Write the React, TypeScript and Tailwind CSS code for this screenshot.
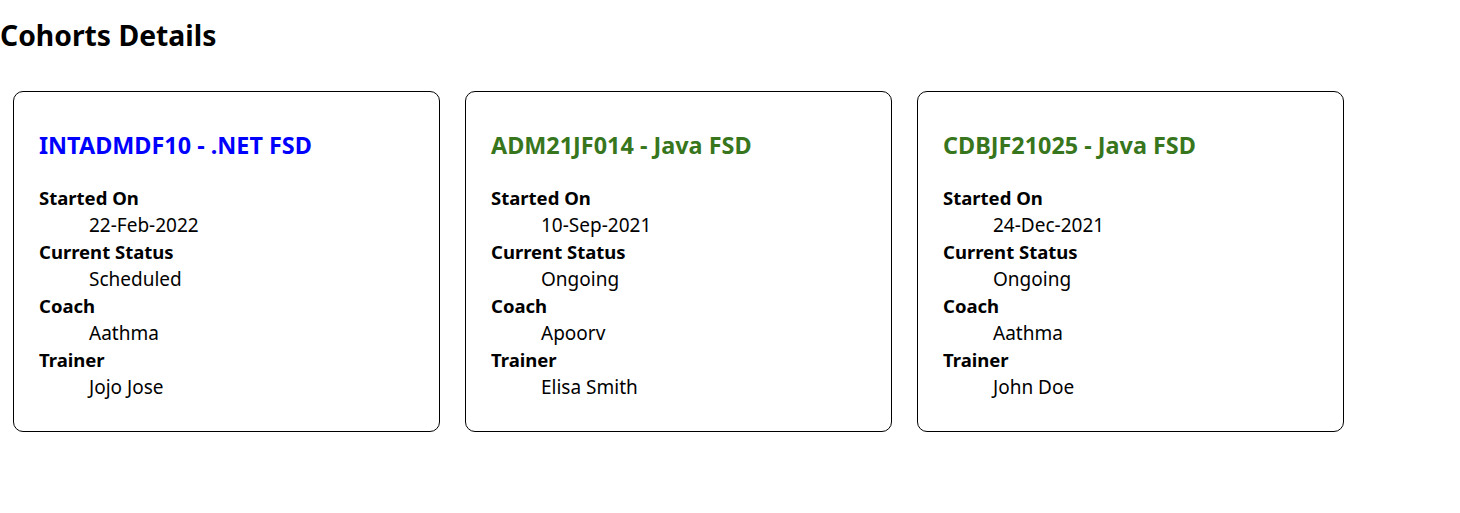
import React from "react";

type Cohort = {
  title: string;
  color: string;
  started: string;
  status: string;
  coach: string;
  trainer: string;
};

const cohorts: Cohort[] = [
  { title: "INTADMDF10 - .NET FSD", color: "blue", started: "22-Feb-2022", status: "Scheduled", coach: "Aathma", trainer: "Jojo Jose" },
  { title: "ADM21JF014 - Java FSD", color: "green", started: "10-Sep-2021", status: "Ongoing", coach: "Apoorv", trainer: "Elisa Smith" },
  { title: "CDBJF21025 - Java FSD", color: "green", started: "24-Dec-2021", status: "Ongoing", coach: "Aathma", trainer: "John Doe" },
];

function Row({ label, value }: { label: string; value: string }) {
  return (
    <>
      <dt className="font-bold text-[18.5px] leading-[26px]">{label}</dt>
      <dd className="ml-[50px] text-[19px] leading-[28px]">{value}</dd>
    </>
  );
}

function Card({ c }: { c: Cohort }) {
  return (
    <div className="w-[427px] border border-black rounded-[10px] px-[25px] pt-[38px] pb-[30px]">
      <h3 className={(c.color === "blue" ? "text-[#0000ff]" : "text-[#38761d]") + " text-[23.4px] leading-[31px] font-bold"}>{c.title}</h3>
      <dl className="mt-[24px] text-black">
        <Row label="Started On" value={c.started} />
        <Row label="Current Status" value={c.status} />
        <Row label="Coach" value={c.coach} />
        <Row label="Trainer" value={c.trainer} />
      </dl>
    </div>
  );
}

export default function App() {
  return (
    <div className="bg-white min-h-[513px] font-['Noto_Sans',sans-serif] text-black">
      <h2 className="pt-[15px] text-[28.3px] leading-[40px] font-bold">Cohorts Details</h2>
      <div className="mt-[36px] flex gap-[25px] pl-[13px]">
        {cohorts.map((c) => (
          <Card key={c.title} c={c} />
        ))}
      </div>
    </div>
  );
}
